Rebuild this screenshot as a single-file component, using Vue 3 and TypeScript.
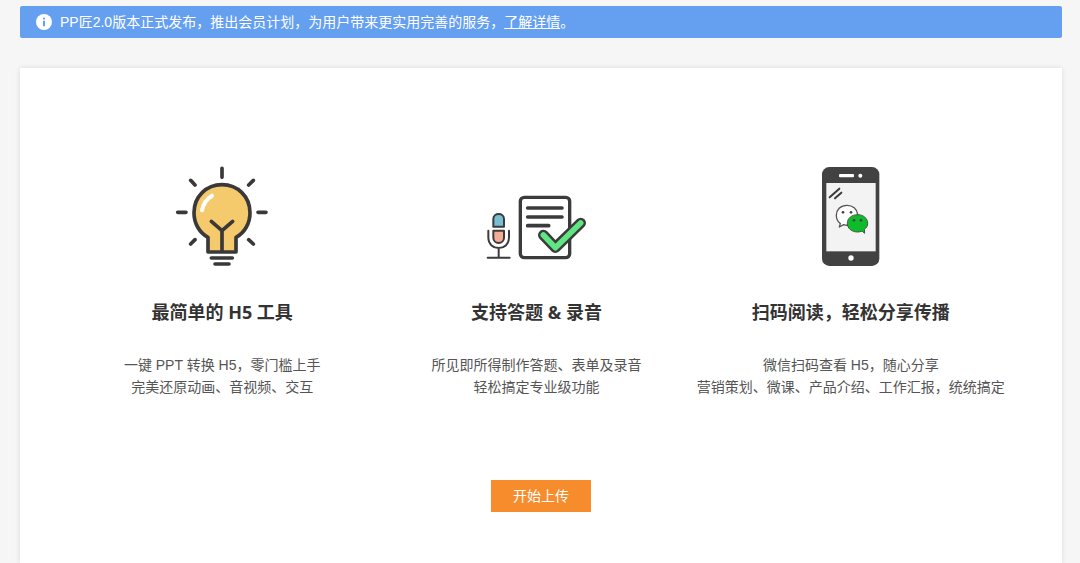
<script setup lang="ts">
type IconName = 'bulb' | 'quiz' | 'phone'

interface Feature {
  icon: IconName
  title: string
  lines: string[]
}

const features: Feature[] = [
  {
    icon: 'bulb',
    title: '最简单的 H5 工具',
    lines: ['一键 PPT 转换 H5，零门槛上手', '完美还原动画、音视频、交互'],
  },
  {
    icon: 'quiz',
    title: '支持答题 & 录音',
    lines: ['所见即所得制作答题、表单及录音', '轻松搞定专业级功能'],
  },
  {
    icon: 'phone',
    title: '扫码阅读，轻松分享传播',
    lines: ['微信扫码查看 H5，随心分享', '营销策划、微课、产品介绍、工作汇报，统统搞定'],
  },
]
</script>

<template>
  <div class="page">
    <div class="notice" role="status">
      <svg class="notice-icon" viewBox="0 0 16 16" aria-hidden="true">
        <circle cx="8" cy="8" r="8" fill="#fff" />
        <circle cx="8" cy="4.6" r="1.1" fill="#659ff0" />
        <rect x="7" y="6.8" width="2" height="5.4" fill="#659ff0" />
      </svg>
      <p class="notice-text">PP匠2.0版本正式发布，推出会员计划，为用户带来更实用完善的服务，<a href="#">了解详情</a>。</p>
    </div>

    <main class="card">
      <div class="features">
        <section v-for="feature in features" :key="feature.icon" class="feature">
          <svg v-if="feature.icon === 'bulb'" class="icon" viewBox="21 33 300 300" aria-hidden="true">
            <g fill="none" stroke="#3a3838" stroke-width="11" stroke-linecap="round" stroke-linejoin="round">
              <path d="M171 40V67M77 76L90 90M265 76L251 90M38 172H63M279 172H303M90 254L77 267M251 254L265 267" />
              <path
                d="M129 291V247C103 233 87 205 87 173C87 125 124 89 171 89S255 125 255 173C255 205 239 233 213 247V291Z"
                fill="#f4ca6c"
              />
              <path d="M171 288V227M139 199L171 227L203 199" />
              <path d="M139 309H202M150 327H192" />
              <path d="M111 166C115 145 126 131 141 122" stroke="#fff" stroke-width="12" />
            </g>
          </svg>

          <svg v-else-if="feature.icon === 'quiz'" class="icon" viewBox="33 -57 300 300" aria-hidden="true">
            <g fill="none" stroke="#3c3b3b" stroke-linecap="round" stroke-linejoin="round">
              <rect x="136" y="37" width="148" height="181" rx="12" stroke-width="10" />
              <path d="M158 69H261M158 96H261M158 122H221" stroke-width="11" />
              <path d="M205 150L241 188L317 114" stroke-width="32" />
              <path d="M205 150L241 188L317 114" stroke="#60e583" stroke-width="17" />
              <g stroke-width="6">
                <path d="M55 125V102C55 82 87 82 87 102V125Z" fill="#78bfd1" />
                <path d="M55 137H87V158C87 179 55 179 55 158Z" fill="#f5ac96" />
                <path d="M40 137V157C40 200 102 200 102 157V137M71 190V218M38 218H104" />
              </g>
            </g>
          </svg>

          <svg v-else class="icon" viewBox="-27 33 300 300" aria-hidden="true">
            <rect x="36" y="36" width="172" height="297" rx="22" fill="#434243" />
            <rect x="49" y="84" width="148" height="205" fill="#f3f3f3" />
            <rect x="87" y="57" width="45" height="10" rx="3" fill="#fff" />
            <circle cx="151" cy="62" r="6" fill="#fff" />
            <circle cx="123" cy="309" r="8" fill="#fff" />
            <path d="M59 127L88 101M75 130L94 113" stroke="#3c3b3c" stroke-width="6" stroke-linecap="round" />
            <path
              d="M111 151C91 151 79 165 79 181C79 192 84 201 91 206L88 216L101 209C106 211 113 211 119 210C136 207 145 195 143 178C141 162 128 151 111 151Z"
              fill="#fff" stroke="#555" stroke-width="4" stroke-linejoin="round"
            />
            <path
              d="M143 179C125 179 112 190 112 205C112 220 125 231 143 231C148 231 152 230 156 228L164 235L163 223C170 218 173 212 173 205C173 190 160 179 143 179Z"
              fill="#0dbb2b" stroke="#3c5a40" stroke-width="3" stroke-linejoin="round"
            />
            <g fill="#444">
              <circle cx="99" cy="172" r="4" />
              <circle cx="123" cy="172" r="4" />
              <circle cx="132" cy="196" r="4" />
              <circle cx="153" cy="196" r="4" />
            </g>
          </svg>

          <h2 class="title">{{ feature.title }}</h2>
          <p class="description">
            <span v-for="line in feature.lines" :key="line" class="line">{{ line }}</span>
          </p>
        </section>
      </div>
      <button class="upload" type="button">开始上传</button>
    </main>
  </div>
</template>

<style>
body {
  background: #f6f6f6;
}
</style>

<style scoped>
.page {
  display: flex;
  flex-direction: column;
  gap: 30px;
  box-sizing: border-box;
  min-height: 100vh;
  padding: 6px 18px 0 20px;
  font-family: "Liberation Sans", "Noto Sans CJK SC", sans-serif;
  font-size: 14px;
  line-height: 22px;
  color: #555;
}

.notice {
  display: flex;
  align-items: center;
  gap: 8px;
  padding: 5px 16px;
  border-radius: 2px;
  background: #659ff0;
  color: #fff;
}

.notice-icon {
  flex: none;
  width: 16px;
  height: 16px;
}

.notice-text {
  margin: 0;
}

.notice-text a {
  color: inherit;
  text-decoration: underline;
}

.card {
  display: flex;
  flex: 1;
  flex-direction: column;
  align-items: center;
  padding: 98px 0 51px;
  background: #fff;
  box-shadow: 0 0 5px rgba(0, 0, 0, 0.12);
}

.features {
  display: grid;
  grid-template-columns: repeat(3, 1fr);
  align-self: stretch;
  padding: 0 54px 0 45px;
}

.feature {
  display: flex;
  flex-direction: column;
  align-items: center;
  text-align: center;
}

.icon {
  width: 100px;
  height: 100px;
}

.title {
  margin: 32px 0 28px;
  font-family: "Open Sans", "Noto Sans CJK SC", sans-serif;
  font-size: 18px;
  font-weight: 700;
  line-height: 28px;
  color: #333;
}

.description {
  margin: 0;
}

.line {
  display: block;
  white-space: nowrap;
}

.upload {
  margin-top: 82px;
  padding: 5px 22px;
  border: 0;
  background: #f68c2c;
  color: #fff;
  font: inherit;
  cursor: pointer;
}
</style>
